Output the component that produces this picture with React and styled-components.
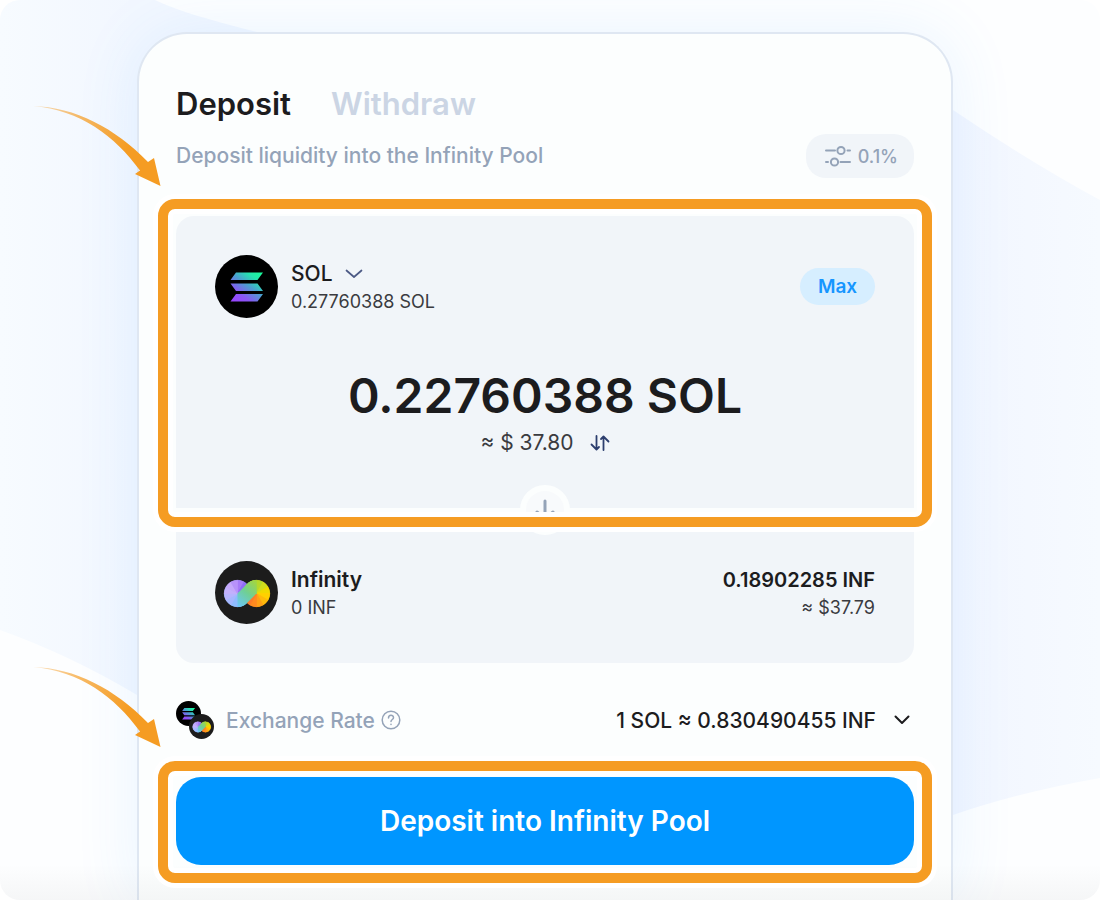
import React from 'react';
import styled, { createGlobalStyle } from 'styled-components';

const Global = createGlobalStyle`
  * { box-sizing: border-box; }
  body { margin: 0; background: #fff; font-family: Inter, "Liberation Sans", sans-serif; color: #1c1c1e; }
  button, input { font: inherit; color: inherit; border: 0; padding: 0; margin: 0; background: none; }
  button { cursor: pointer; }
  p { margin: 0; }
`;

const Page = styled.div`
  position: relative;
  min-height: 100vh;
  display: flex;
  padding: 32px 147px 0 137px;
  overflow: hidden;
  border-radius: 20px;
  background: #fdfeff;
`;

const Backdrop = styled.svg`
  position: absolute;
  inset: 0;
  width: 100%;
  height: 100%;
`;

const Shade = styled.div`
  position: absolute;
  inset: auto 0 0 0;
  height: 36px;
  background: linear-gradient(rgba(120, 120, 120, 0), rgba(120, 120, 120, 0.06));
  pointer-events: none;
`;

const Card = styled.main`
  position: relative;
  flex: 1;
  display: flex;
  flex-direction: column;
  gap: 38px;
  padding: 50px 37px 35px;
  border: 2px solid #dfe7f2;
  border-bottom: 0;
  border-radius: 50px 50px 0 0;
  background: #fcfefe;
  box-shadow: 0 0 64px rgba(60, 160, 255, 0.1);
`;

const Header = styled.header`
  display: flex;
  flex-direction: column;
  gap: 10px;
`;

const Tabs = styled.nav`
  display: flex;
  gap: 40px;
`;

const Tab = styled.button`
  font-size: 31px;
  line-height: 40px;
  font-weight: 600;
  color: ${(p) => (p.$active ? '#1c1c1e' : '#cbd5e4')};
`;

const Row = styled.div`
  display: flex;
  align-items: center;
  justify-content: space-between;
`;

const Subtitle = styled.p`
  font-size: 21px;
  line-height: 28px;
  font-weight: 500;
  color: #94a3b8;
`;

const Slippage = styled.button`
  display: flex;
  align-items: center;
  gap: 6px;
  height: 44px;
  padding: 0 16px 0 18px;
  border-radius: 20px;
  background: #f1f5f9;
  color: #94a3b8;
  font-size: 18px;
  font-weight: 500;
`;

const Pools = styled.section`
  display: flex;
  flex-direction: column;
  gap: 4px;
`;

const Highlight = styled.div`
  position: relative;
  display: flex;
  flex-direction: column;
`;

const Frame = styled.div`
  position: absolute;
  z-index: 2;
  inset: ${(p) => p.$inset};
  border: 10px solid #f59c23;
  border-radius: 17px;
  box-shadow: 0 0 0 5px #fff, inset 0 0 0 5px #fff;
  pointer-events: none;
`;

const ArrowSvg = styled.svg`
  position: absolute;
  z-index: 3;
  left: -146px;
  top: -116px;
  width: 134px;
  height: 90px;
  pointer-events: none;
`;

const Panel = styled.div`
  padding: ${(p) => (p.$last ? '49px 39px 39px' : '39px 39px 51px')};
  border-radius: ${(p) => (p.$last ? '0 0 18px 18px' : '18px 18px 0 0')};
  background: #f1f5f9;
`;

const Token = styled.div`
  display: flex;
  align-items: center;
  gap: 13px;
`;

const Lines = styled.div`
  display: flex;
  flex-direction: column;
  align-items: ${(p) => (p.$end ? 'flex-end' : 'flex-start')};
  padding-top: 2px;
`;

const Name = styled.span`
  display: flex;
  align-items: center;
  gap: 12px;
  font-size: ${(p) => (p.$value ? '20px' : '21px')};
  line-height: 28px;
  font-weight: 600;
`;

const TokenPicker = styled.button`
  display: flex;
  align-items: center;
  gap: 12px;
  font-size: 21px;
  line-height: 28px;
  font-weight: 500;
`;

const Detail = styled.span`
  font-size: 18px;
  line-height: 28px;
  color: #3a3b40;
`;

const Max = styled.button`
  width: 75px;
  height: 37px;
  border-radius: 19px;
  background: #d6eeff;
  color: #1696ff;
  font-size: 19px;
  font-weight: 600;
`;

const Amount = styled.input`
  display: block;
  width: 100%;
  height: 60px;
  margin-top: 47px;
  text-align: center;
  font-size: 48px;
  font-weight: 600;
  outline: 0;
`;

const Fiat = styled.div`
  display: flex;
  align-items: center;
  justify-content: center;
  gap: 16px;
  margin-top: 4px;
  font-size: 21px;
  line-height: 28px;
  color: #3a3b40;
`;

const IconButton = styled.button`
  display: flex;
`;

const Switcher = styled.button`
  position: absolute;
  z-index: 1;
  left: 50%;
  bottom: -27px;
  width: 50px;
  height: 50px;
  margin-left: -25px;
  border: 6px solid #fcfefe;
  border-radius: 50%;
  background: #f8fafc;
  display: flex;
  align-items: center;
  justify-content: center;
`;

const Pair = styled.div`
  display: grid;
  width: 38px;
  height: 38px;
  > :first-child { grid-area: 1 / 1; place-self: start; }
  > :last-child { grid-area: 1 / 1; place-self: end; }
`;

const RateLabel = styled.div`
  display: flex;
  align-items: center;
  gap: 12px;
  font-size: 21px;
  font-weight: 500;
  color: #94a3b8;
`;

const Hint = styled.span`
  display: flex;
  align-items: center;
  gap: 6px;
`;

const Rate = styled.button`
  display: flex;
  align-items: center;
  gap: 18px;
  padding-right: 4px;
  font-size: 21px;
  font-weight: 500;
`;

const Submit = styled.button`
  height: 88px;
  border-radius: 25px;
  background: #0096ff;
  color: #fff;
  font-size: 28px;
  font-weight: 600;
`;

function SolLogo({ size, id }) {
  return (
    <svg width={size} height={size} viewBox="0 0 63 63" aria-hidden="true">
      <defs>
        <linearGradient id={id} gradientUnits="userSpaceOnUse" x1="20" y1="48" x2="44" y2="16">
          <stop offset="0" stopColor="#9945ff" />
          <stop offset="0.25" stopColor="#8a55f5" />
          <stop offset="0.55" stopColor="#4b9fd0" />
          <stop offset="0.8" stopColor="#24e6ad" />
          <stop offset="1" stopColor="#19fb9b" />
        </linearGradient>
      </defs>
      <circle cx="31.5" cy="31.5" r="31.5" fill="#000" />
      <path fill={`url(#${id})`} d="M21 17.5H48L42.5 25H15.5ZM15.500 28.5H42.5L48 36H21ZM21 39H48L42.5 46.5H15.5Z" />
    </svg>
  );
}

const leftWheel = ['#a77bf8', '#8f6cf5', '#6fc6ee', '#6cc8f4', '#74c4fb', '#7abfff', '#8fbcff', '#a5b8ff', '#b7b4ff', '#c3b0fd', '#c6a8fb', '#b892fa'];
const rightWheel = ['#b5d92a', '#cfdc1c', '#f0d900', '#ffd000', '#ffb90a', '#ffa016', '#ff8a20', '#fb7a2c', '#f77d22', '#6fd08c', '#8dd45c', '#a2d63d'];

function Wheel({ cx, cy, r, colors }) {
  const step = (Math.PI * 2) / colors.length;
  const at = (a) => `${cx + r * Math.sin(a)} ${cy - r * Math.cos(a)}`;
  return (
    <>
      <circle cx={cx} cy={cy} r={r} fill={colors[4]} />
      {colors.map((c, i) => (
        <path key={c} fill={c} stroke={c} strokeWidth="0.8" strokeLinejoin="round" d={`M${cx} ${cy}L${at(i * step)}A${r} ${r} 0 0 1 ${at((i + 1) * step)}Z`} />
      ))}
    </>
  );
}

function InfLogo({ size, id }) {
  return (
    <svg width={size} height={size} viewBox="0 0 63 63" aria-hidden="true">
      <defs>
        <linearGradient id={id} gradientUnits="userSpaceOnUse" x1="22" y1="44" x2="42" y2="20">
          <stop offset="0" stopColor="#6cc6f6" />
          <stop offset="0.5" stopColor="#6fcf95" />
          <stop offset="1" stopColor="#a6d639" />
        </linearGradient>
      </defs>
      <circle cx="31.5" cy="31.5" r="31.5" fill="#1c1c1c" />
      <Wheel cx={22.5} cy={32.5} r={13.2} colors={leftWheel} />
      <Wheel cx={41.5} cy={32.5} r={13.2} colors={rightWheel} />
      <path fill={`url(#${id})`} d="M22.5 32.5L32 23Q36 19 41.5 19V32.500L32 42Q28 46 22.500 46Z" />
    </svg>
  );
}

function Chevron({ color, width, weight }) {
  return (
    <svg width={width} height="10" viewBox={`0 0 ${width} 10`} fill="none" stroke={color} strokeWidth={weight} strokeLinecap="round" strokeLinejoin="round" aria-hidden="true">
      <path d={`M1.5 1.5L${width / 2} 8L${width - 1.5} 1.5`} />
    </svg>
  );
}

function Arrow({ id }) {
  return (
    <ArrowSvg viewBox="0 0 134 90" aria-hidden="true">
      <defs>
        <linearGradient id={id} gradientUnits="userSpaceOnUse" x1="3" y1="6" x2="105" y2="60">
          <stop offset="0" stopColor="#f59c23" stopOpacity="0.3" />
          <stop offset="0.4" stopColor="#f59c23" stopOpacity="0.7" />
          <stop offset="0.9" stopColor="#f59c23" />
        </linearGradient>
      </defs>
      <path fill={`url(#${id})`} d="M3 6C45 7 85 28 118 62L124 58L130.5 86L105 74L110 70.5C85 36 50 10 3 6Z" />
    </ArrowSvg>
  );
}

export default function App() {
  return (
    <>
      <Global />
      <Page>
        <Backdrop viewBox="0 0 1100 900" preserveAspectRatio="none" aria-hidden="true">
          <defs>
            <linearGradient id="sweep" x1="0" x2="1" y1="0" y2="0">
              <stop offset="0" stopColor="#f7fbff" />
              <stop offset="0.12" stopColor="#f2f7ff" />
              <stop offset="0.87" stopColor="#f2f6ff" />
              <stop offset="1" stopColor="#f6faff" />
            </linearGradient>
          </defs>
          <path fill="url(#sweep)" d="M0 0H155C200 22 300 40 400 70L953 110Q1030 162 1100 200V778Q1020 792 953 815L137 695Q70 655 0 630Z" />
        </Backdrop>
        <Card>
          <Header>
            <Tabs>
              <Tab $active>Deposit</Tab>
              <Tab>Withdraw</Tab>
            </Tabs>
            <Row>
              <Subtitle>Deposit liquidity into the Infinity Pool</Subtitle>
              <Slippage>
                <svg width="28" height="24" viewBox="0 0 28 24" fill="none" stroke="#94a3b8" strokeWidth="2" strokeLinecap="round" aria-hidden="true">
                  <path d="M2 6.5H11M23.5 6.5H26M2 18H4M16.5 18H26" />
                  <circle cx="17" cy="6.5" r="3.6" />
                  <circle cx="10.5" cy="18" r="3.6" />
                </svg>
                0.1%
              </Slippage>
            </Row>
          </Header>

          <Pools>
            <Highlight>
              <Panel>
                <Row>
                  <Token>
                    <SolLogo size={63} id="sol-large" />
                    <Lines>
                      <TokenPicker>
                        SOL <Chevron color="#4c5a85" width={18} weight={1.7} />
                      </TokenPicker>
                      <Detail>0.27760388 SOL</Detail>
                    </Lines>
                  </Token>
                  <Max>Max</Max>
                </Row>
                <Amount aria-label="Amount to deposit" defaultValue="0.22760388 SOL" />
                <Fiat>
                  ≈ $ 37.80
                  <IconButton aria-label="Swap currency">
                    <svg width="20" height="16" viewBox="0 0 20 16" fill="none" stroke="#2c3e6e" strokeWidth="1.8" strokeLinecap="round" strokeLinejoin="round" aria-hidden="true">
                      <path d="M6.500 1V14M1.500 9.500L6.500 14.500L9 12M13.500 15V2M18.500 6.500L13.500 1.500L11 4" />
                    </svg>
                  </IconButton>
                </Fiat>
              </Panel>
              <Switcher aria-label="Switch direction">
                <svg width="20" height="26" viewBox="0 0 20 26" fill="none" stroke="#94a3b8" strokeWidth="3" strokeLinecap="round" strokeLinejoin="round" aria-hidden="true">
                  <path d="M10 4V20M2 15L10 22L18 15" />
                </svg>
              </Switcher>
              <Frame $inset="-17px -18px -19px -18px" />
              <Arrow id="arrow-pool" />
            </Highlight>
            <Panel $last>
              <Row>
                <Token>
                  <InfLogo size={63} id="inf-large" />
                  <Lines>
                    <Name>Infinity</Name>
                    <Detail>0 INF</Detail>
                  </Lines>
                </Token>
                <Lines $end>
                  <Name $value>0.18902285 INF</Name>
                  <Detail>≈ $37.79</Detail>
                </Lines>
              </Row>
            </Panel>
          </Pools>

          <Row>
            <RateLabel>
              <Pair>
                <SolLogo size={25} id="sol-small" />
                <InfLogo size={25} id="inf-small" />
              </Pair>
              <Hint>
                Exchange Rate
                <svg width="20" height="20" viewBox="0 0 20 20" fill="none" stroke="#94a3b8" strokeWidth="1.5" strokeLinecap="round" aria-hidden="true">
                  <circle cx="10" cy="10" r="8.8" />
                  <path d="M7.5 8C7.5 4.5 12.5 4.5 12.5 7.7C12.5 9.5 10 9.5 10 11.5M10 14.3V14.5" />
                </svg>
              </Hint>
            </RateLabel>
            <Rate>
              1 SOL ≈ 0.830490455 INF
              <Chevron color="#1c1c1e" width={16} weight={2} />
            </Rate>
          </Row>

          <Highlight>
            <Submit>Deposit into Infinity Pool</Submit>
            <Frame $inset="-16px -18px -18px -18px" />
            <Arrow id="arrow-submit" />
          </Highlight>
        </Card>
        <Shade />
      </Page>
    </>
  );
}
